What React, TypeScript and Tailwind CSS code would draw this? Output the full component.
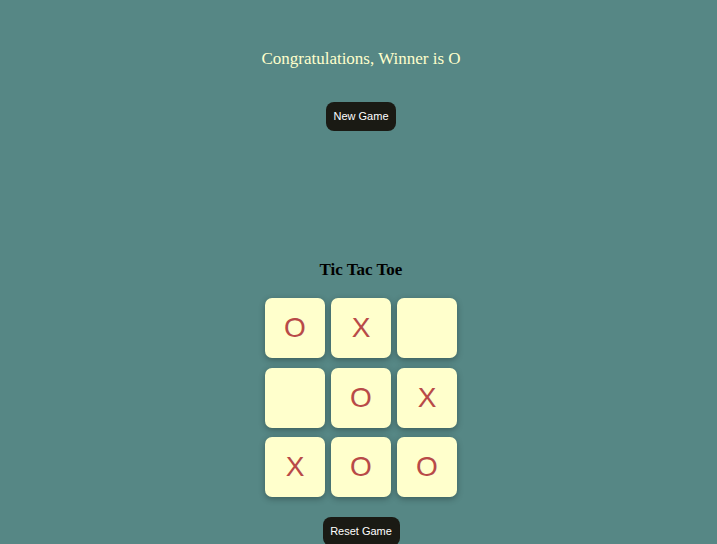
import React from "react";

const board = ["O", "X", "", "", "O", "X", "X", "O", "O"];

export default function App() {
  return (
    <div className="min-h-[544px] w-full bg-[#568785] pl-[5px] flex flex-col items-center font-['Liberation_Serif',serif]">
      <div className="mt-[48px] text-[17px] leading-[22px] text-[#ffffcc]">Congratulations, Winner is O</div>
      <button className="mt-[32px] h-[29px] w-[70px] rounded-[8px] bg-[#1a1a14] text-[11px] text-white font-['Liberation_Sans',sans-serif]">
        New Game
      </button>
      <div className="mt-[128px] text-[17px] font-bold leading-[22px] text-black">Tic Tac Toe</div>
      <div className="mt-[17px] grid grid-cols-[60px_60px_60px] gap-x-[6px] gap-y-[9.5px]">
        {board.map((v, i) => (
          <div
            key={i}
            className="h-[60px] w-[60px] rounded-[7px] bg-[#ffffcc] flex items-center justify-center text-[28px] text-[#b84a48] shadow-[0_2px_6px_rgba(0,0,0,0.3)] font-['Liberation_Sans',sans-serif]"
          >
            {v}
          </div>
        ))}
      </div>
      <button className="mt-[20px] h-[29px] w-[77px] rounded-[8px] bg-[#1a1a14] text-[11px] text-white font-['Liberation_Sans',sans-serif]">
        Reset Game
      </button>
    </div>
  );
}
